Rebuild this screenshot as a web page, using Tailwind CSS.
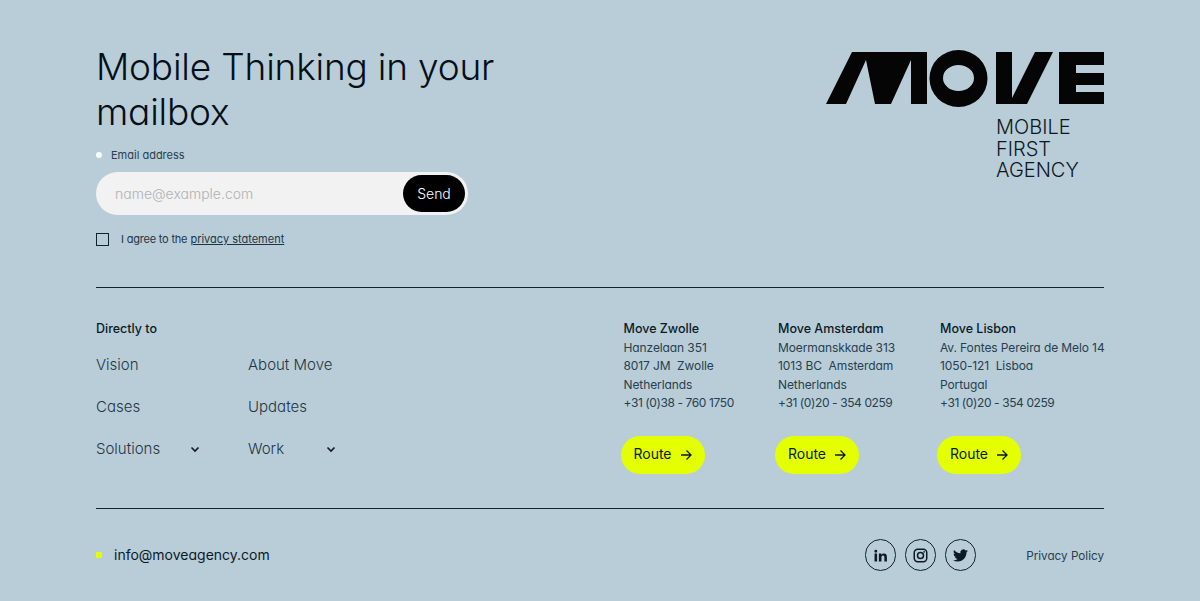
<!doctype html>
<html><head><meta charset="utf-8"><script src="https://cdn.jsdelivr.net/npm/@tailwindcss/browser@4"></script></head>
<body class="m-0 bg-[#b9cdd8] font-['Inter','Noto_Sans',sans-serif] [font-feature-settings:'cv11'] text-[#0b1a26]">
<div class="w-[1200px] h-[601px] overflow-hidden px-[96px] pt-[44px] flex flex-col">
<div class="h-[244px] shrink-0 flex justify-between border-b border-[#0f2230]">
 <div>
  <h1 class="w-[420px] text-[37px] leading-[45px] font-light tracking-[-0.2px] text-[#050f18]">Mobile Thinking in your mailbox</h1>
  <div class="mt-[13px] flex items-center text-[11px] leading-[16px] text-[#26404f]"><span class="w-[6px] h-[6px] rounded-full bg-white mr-[9px]"></span>Email address</div>
  <div class="mt-[9px] w-[372px] h-[43px] rounded-full bg-[#f2f2f2] flex items-center justify-between pl-[19px] pr-[3px] text-[14px] font-[350]"><span class="text-[#aeb1b2]">name@example.com</span><span class="w-[62px] h-[37px] rounded-full bg-black text-white flex items-center justify-center">Send</span></div>
  <div class="mt-[16px] flex items-center text-[11px] text-[#1f3545]"><span class="w-[13px] h-[13px] border border-[#0f2230] mr-[12px]"></span><span class="tracking-[-0.2px]">I agree to the</span>&nbsp;<span class="underline">privacy statement</span></div>
 </div>
 <div class="w-[279px] pt-[4px]">
  <svg class="block" width="279" height="60" viewBox="825 48 279 60"><path fill="#050505" fill-rule="evenodd" d="M826 104 852 52H927V104H911V60L891 104H875L866 60 846 104ZM958.500 50a29 28.500 0 1 0 0 57a29 28.500 0 1 0 0-57ZM958.500 65a15.500 13 0 1 1 0 26a15.500 13 0 1 1 0-26ZM996 52H1012V98L1035 52H1053L1027 104H996ZM1059 52H1104V65H1076V73H1104V85H1076V92H1104V104H1059Z"/></svg>
  <div class="ml-[171px] mt-[9px] text-[20px] leading-[21.500px] font-[350] text-[#0a1721]">MOBILE<br>FIRST<br>AGENCY</div>
 </div>
</div>
<div class="h-[221px] shrink-0 flex border-b border-[#0f2230] pt-[31px]">
 <div class="w-[527.500px] shrink-0">
  <div class="text-[12.500px] leading-[20px] font-medium">Directly to</div>
  <div class="mt-[5px] grid grid-cols-[152px_88px] auto-rows-[42px] text-[15px] font-[350] text-[#1f3545] whitespace-nowrap">
   <div class="leading-[42px]">Vision</div><div class="leading-[42px]">About Move</div>
   <div class="leading-[42px]">Cases</div><div class="leading-[42px]">Updates</div>
   <div class="flex items-center justify-between w-[104px]">Solutions<svg width="10" height="10" viewBox="0 0 10 10" fill="none" stroke="#0b1a26" stroke-width="1.600"><path d="M1.500 3.500 5 7l3.500-3.500"/></svg></div>
   <div class="flex items-center justify-between">Work<svg width="10" height="10" viewBox="0 0 10 10" fill="none" stroke="#0b1a26" stroke-width="1.600"><path d="M1.500 3.500 5 7l3.500-3.500"/></svg></div>
  </div>
 </div>
 <div class="w-[154.500px] shrink-0 pt-[1px] text-[12px] leading-[18.500px] tracking-[-0.1px] text-[#26404f] whitespace-nowrap"><div class="font-medium text-[12.500px] tracking-normal text-[#0b1a26]">Move Zwolle</div>Hanzelaan 351<br>8017 JM&nbsp; Zwolle<br>Netherlands<br><span class="tracking-[-0.4px]">+31 (0)38 - 760 1750</span>
  <div class="-ml-[3px] mt-[23px] w-[84px] h-[38px] rounded-full bg-[#e3ff00] flex items-center justify-center gap-[8px] text-[14px] tracking-normal text-[#0b1a26]">Route<svg width="12" height="12" viewBox="0 0 12 12" fill="none" stroke="#0b1a26" stroke-width="1.300"><path d="M1 6h10M6.500 1.500 11 6l-4.500 4.500"/></svg></div></div>
 <div class="w-[162px] shrink-0 pt-[1px] text-[12px] leading-[18.500px] tracking-[-0.1px] text-[#26404f] whitespace-nowrap"><div class="font-medium text-[12.500px] tracking-normal text-[#0b1a26]">Move Amsterdam</div>Moermanskkade 313<br>1013 BC&nbsp; Amsterdam<br>Netherlands<br><span class="tracking-[-0.4px]">+31 (0)20 - 354 0259</span>
  <div class="-ml-[3px] mt-[23px] w-[84px] h-[38px] rounded-full bg-[#e3ff00] flex items-center justify-center gap-[8px] text-[14px] tracking-normal text-[#0b1a26]">Route<svg width="12" height="12" viewBox="0 0 12 12" fill="none" stroke="#0b1a26" stroke-width="1.300"><path d="M1 6h10M6.500 1.500 11 6l-4.500 4.500"/></svg></div></div>
 <div class="shrink-0 pt-[1px] whitespace-nowrap text-[12px] leading-[18.500px] tracking-[-0.1px] text-[#26404f]"><div class="font-medium text-[12.500px] tracking-normal text-[#0b1a26]">Move Lisbon</div>Av. Fontes Pereira de Melo 14<br>1050-121&nbsp; Lisboa<br>Portugal<br><span class="tracking-[-0.4px]">+31 (0)20 - 354 0259</span>
  <div class="-ml-[3px] mt-[23px] w-[84px] h-[38px] rounded-full bg-[#e3ff00] flex items-center justify-center gap-[8px] text-[14px] tracking-normal text-[#0b1a26]">Route<svg width="12" height="12" viewBox="0 0 12 12" fill="none" stroke="#0b1a26" stroke-width="1.300"><path d="M1 6h10M6.500 1.500 11 6l-4.500 4.500"/></svg></div></div>
</div>
<div class="flex items-center h-[92px] shrink-0 justify-between">
 <div class="flex items-center text-[14px]"><span class="w-[6px] h-[6px] bg-[#e3ff00] rounded-[1px] mr-[12px]"></span><span class="pb-[2px]">info@moveagency.com</span></div>
 <div class="flex items-center">
  <div class="flex gap-[8.500px] mr-[50px]">
   <span class="w-[31.500px] h-[32px] rounded-full border border-[#0f2230] flex items-center justify-center"><svg width="13" height="13" viewBox="0 0 24 24" fill="#0b1a26"><path d="M1 8.500h4.700V23H1ZM3.350 1.500a2.700 2.700 0 1 1 0 5.400 2.700 2.700 0 0 1 0-5.400ZM9 8.500h4.500v2c.7-1.200 2.300-2.400 4.600-2.400 4.800 0 5.700 3 5.700 7V23h-4.700v-7c0-1.700 0-3.800-2.400-3.800s-2.900 1.800-2.900 3.700V23H9Z"/></svg></span>
   <span class="w-[31.500px] h-[32px] rounded-full border border-[#0f2230] flex items-center justify-center"><svg width="15" height="15" viewBox="0 0 24 24" fill="none" stroke="#0b1a26" stroke-width="2.400"><rect x="2" y="2" width="20" height="20" rx="5.500"/><circle cx="12" cy="12" r="4.800"/><circle cx="17.800" cy="6.200" r="1.300" fill="#0b1a26" stroke="none"/></svg></span>
   <span class="w-[31.500px] h-[32px] rounded-full border border-[#0f2230] flex items-center justify-center"><svg width="15" height="15" viewBox="0 0 24 24" fill="#0b1a26"><path d="M23.950 4.570a10 10 0 0 1-2.820.77 4.960 4.960 0 0 0 2.160-2.720c-.95.55-2 .95-3.130 1.180a4.920 4.920 0 0 0-8.380 4.480C7.690 8.090 4.070 6.130 1.640 3.160a4.820 4.820 0 0 0-.67 2.480c0 1.710.87 3.210 2.190 4.100a4.900 4.900 0 0 1-2.230-.62v.06a4.920 4.920 0 0 0 3.950 4.830 5 5 0 0 1-2.210.08 4.940 4.940 0 0 0 4.600 3.420A9.870 9.870 0 0 1 0 19.540a14 14 0 0 0 7.560 2.210c9.050 0 14-7.500 14-13.980 0-.21 0-.42-.02-.63a9.940 9.940 0 0 0 2.460-2.550Z"/></svg></span>
  </div>
  <span class="pt-[3px] text-[11.700px] text-[#26404f]">Privacy Policy</span>
 </div>
</div>
</div>
</body></html>
